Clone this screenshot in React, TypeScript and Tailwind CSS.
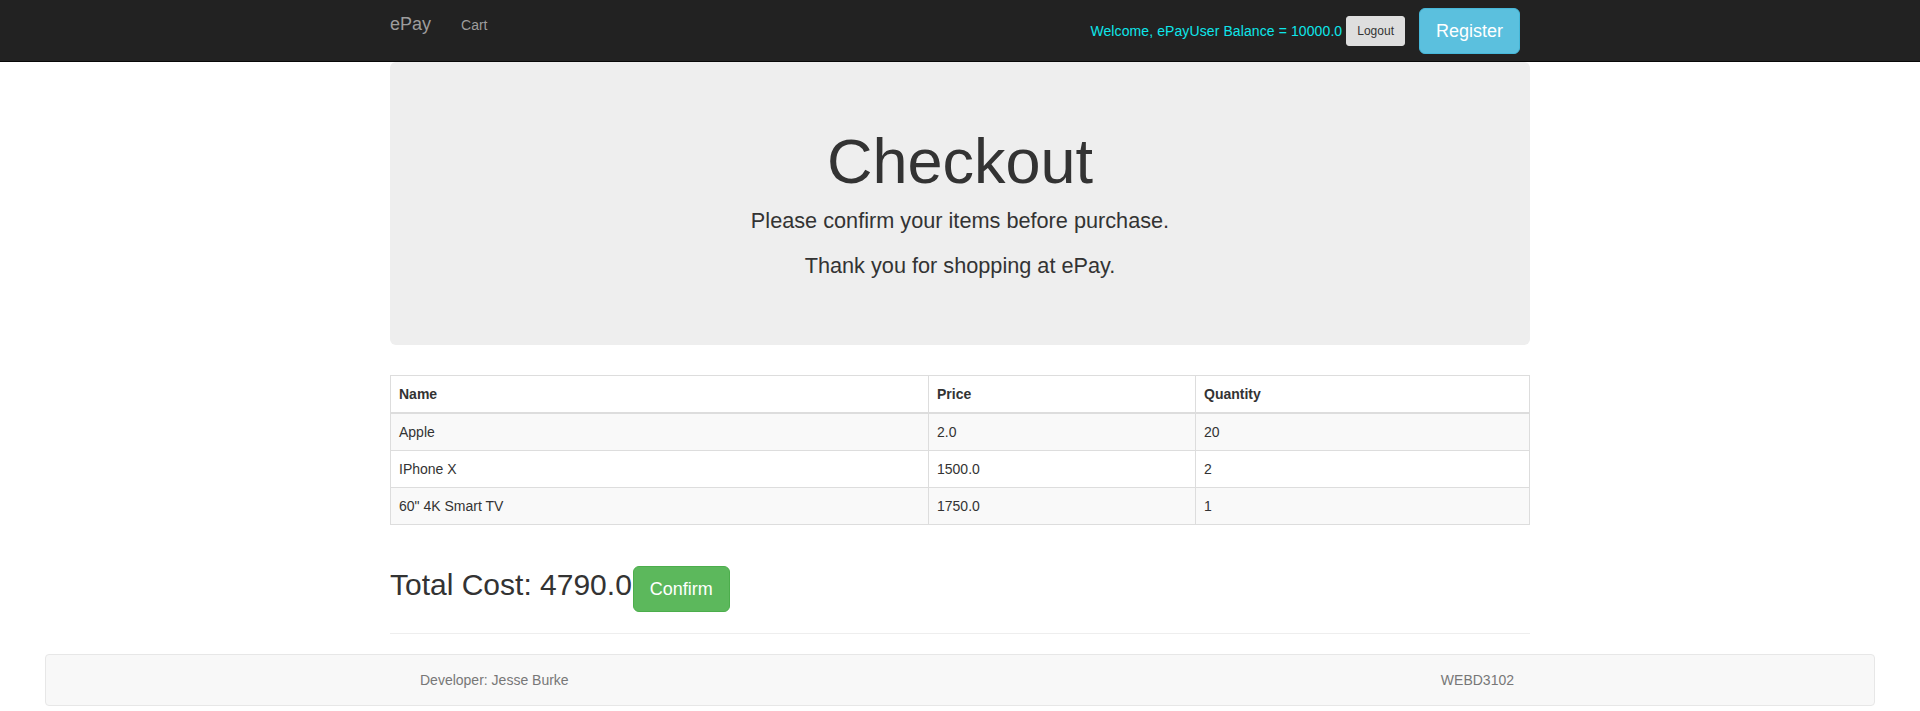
import React from "react";

const rows = [
  { name: "Apple", price: "2.0", qty: "20" },
  { name: "IPhone X", price: "1500.0", qty: "2" },
  { name: '60" 4K Smart TV', price: "1750.0", qty: "1" },
];

export default function App() {
  return (
    <div
      className="min-h-[711px] bg-white text-[#333] text-[14px] leading-[20px]"
      style={{ fontFamily: '"Liberation Sans", Arial, Helvetica, sans-serif' }}
    >
      {/* Navbar */}
      <nav className="bg-[#222] border-b border-[#080808] h-[62px]">
        <div className="w-[1170px] mx-auto px-[15px] flex justify-between">
          <div className="flex items-start h-[50px]">
            <span className="text-[18px] leading-[20px] text-[#9d9d9d] pt-[14px] pr-[15px]">ePay</span>
            <span className="text-[14px] leading-[20px] text-[#9d9d9d] p-[15px]">Cart</span>
          </div>
          <div className="flex items-center h-[61px] mr-[10px]">
            <span className="text-[#0ee6ea] text-[14px] tracking-[0.1px] mr-[4px]">Welcome, ePayUser Balance = 10000.0</span>
            <button className="bg-[#dedede] text-[#333] text-[12px] leading-[18px] px-[10px] py-[5px] border border-[#dedede] rounded-[3px]">
              Logout
            </button>
            <button className="ml-[14px] bg-[#5bc0de] border border-[#46b8da] text-white text-[18px] leading-[24px] px-[16px] py-[10px] rounded-[6px]">
              Register
            </button>
          </div>
        </div>
      </nav>

      {/* Main */}
      <div className="w-[1170px] mx-auto px-[15px]">
        <div className="bg-[#eee] rounded-[6px] px-[60px] pt-[48px] pb-[49px] text-center">
          <h1 className="text-[63px] leading-[1.1] mt-[17px] mb-[10px] text-[#333]">Checkout</h1>
          <p className="text-[21.7px] leading-[30px] font-extralight mb-[15px]">Please confirm your items before purchase.</p>
          <p className="text-[21.7px] leading-[30px] font-extralight mb-[15px]">Thank you for shopping at ePay.</p>
        </div>

        <table className="w-full mt-[30px] border-collapse border border-[#ddd]">
          <thead>
            <tr>
              <th className="w-[538px] text-left font-bold p-[8px] border border-[#ddd] border-b-2">Name</th>
              <th className="w-[267px] text-left font-bold p-[8px] border border-[#ddd] border-b-2">Price</th>
              <th className="text-left font-bold p-[8px] border border-[#ddd] border-b-2">Quantity</th>
            </tr>
          </thead>
          <tbody>
            {rows.map((r, i) => (
              <tr key={r.name} className={i % 2 === 0 ? "bg-[#f9f9f9]" : "bg-white"}>
                <td className="p-[8px] border border-[#ddd]">{r.name}</td>
                <td className="p-[8px] border border-[#ddd]">{r.price}</td>
                <td className="p-[8px] border border-[#ddd]">{r.qty}</td>
              </tr>
            ))}
          </tbody>
        </table>

        <div className="mt-[41px] flex items-baseline">
          <h2 className="text-[30px] leading-[33px] text-[#333]">Total Cost: 4790.0</h2>
          <button className="ml-[1px] bg-[#5cb85c] border border-[#4cae4c] text-white text-[18px] leading-[24px] px-[16px] py-[10px] rounded-[6px]">
            Confirm
          </button>
        </div>

        <hr className="mt-[21px] mb-[20px] border-0 border-t border-[#eee]" />
      </div>

      {/* Footer */}
      <footer className="mx-[45px] h-[52px] bg-[#f8f8f8] border border-[#e7e7e7] rounded-[4px]">
        <div className="w-[1170px] mx-auto flex justify-between pl-[45px] pr-[31px] pt-[15px] text-[#777] text-[14px] leading-[20px]">
          <span>Developer: Jesse Burke</span>
          <span>WEBD3102</span>
        </div>
      </footer>
    </div>
  );
}
